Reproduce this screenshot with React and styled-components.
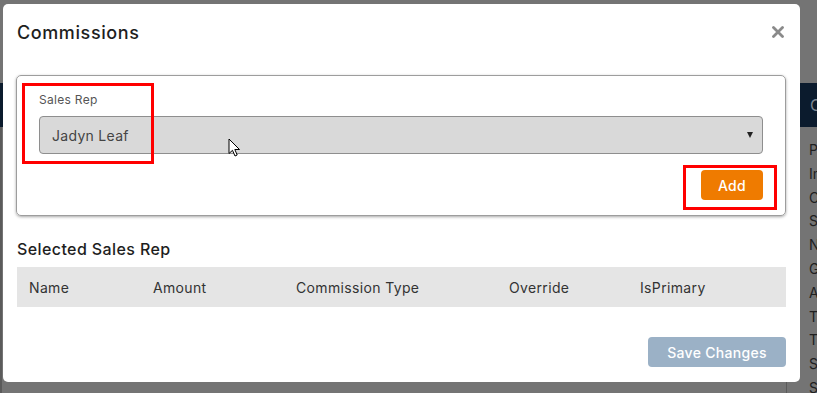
import React from "react";
import styled, { createGlobalStyle } from "styled-components";

const GlobalStyle = createGlobalStyle`
  html, body {
    margin: 0;
    padding: 0;
    background: #737373;
    overflow: hidden;
  }
  * {
    box-sizing: border-box;
  }
`;

const FONT = `"Inter", "DejaVu Sans", sans-serif`;

const Page = styled.div`
  position: relative;
  width: 817px;
  height: 393px;
  overflow: hidden;
  font-family: ${FONT};
`;

/* page behind the dimmed overlay */
const Backdrop = styled.div`
  display: flex;
  flex-direction: column;
  height: 100%;
  background: #747474;
`;

const TopArea = styled.div`
  flex: 0 0 83px;
`;

const NavBar = styled.div`
  flex: 0 0 44px;
  background: #0b1b2d;
  display: flex;
  align-items: center;
  padding-left: 810px;
  color: #7c8590;
  font-size: 16px;
  white-space: nowrap;
  overflow: hidden;
`;

const BackBody = styled.div`
  flex: 1;
  display: flex;
  min-width: 0;
  min-height: 0;
  overflow: hidden;
`;

const LeftColumn = styled.div`
  flex: 0 0 787px;
  border-left: 2px solid #5b5b5b;
  border-right: 1px solid #5b5b5b;
`;

const RightColumn = styled.ul`
  flex: 1;
  min-width: 0;
  overflow: hidden;
  list-style: none;
  margin: 0;
  padding: 11px 0 0 22px;
  display: flex;
  flex-direction: column;
`;

const BackItem = styled.li`
  flex-shrink: 0;
  height: 23.8px;
  line-height: 23.8px;
  font-size: 14px;
  color: #202020;
  white-space: nowrap;
`;

const Modal = styled.div`
  position: absolute;
  left: 3px;
  top: 4px;
  width: 797px;
  height: 378px;
  background: #fff;
  border-radius: 5px;
  padding: 0 14px;
  display: flex;
  flex-direction: column;
`;

const ModalHeader = styled.div`
  height: 71px;
  display: flex;
  align-items: center;
  justify-content: space-between;
  padding-bottom: 15px;
`;

const Title = styled.h4`
  margin: 0;
  font-size: 18px;
  font-weight: 500;
  letter-spacing: 0.6px;
  color: #1e1e1e;
`;

const CloseButton = styled.button`
  border: 0;
  background: none;
  padding: 0;
  margin-right: 2px;
  width: 12px;
  height: 12px;
  display: flex;
  cursor: pointer;
`;

const Card = styled.div`
  margin-left: -1px;
  border: 1px solid #9d9d9d;
  border-radius: 5px;
  box-shadow: 0 1px 3px rgba(0, 0, 0, 0.35);
  padding: 16px 22px 15px 22px;
  display: flex;
  flex-direction: column;
`;

const Label = styled.label`
  font-size: 12px;
  line-height: 16px;
  letter-spacing: 0.3px;
  color: #555;
  margin-bottom: 8px;
`;

const Select = styled.div`
  height: 38px;
  background: #d9d9d9;
  border: 1px solid #8e8e8e;
  border-radius: 4px;
  display: flex;
  align-items: center;
  justify-content: space-between;
  padding: 0 9px 0 12px;
  font-size: 14px;
  letter-spacing: 0.3px;
  color: #444;
`;

const Caret = styled.span`
  width: 0;
  height: 0;
  border-left: 3.5px solid transparent;
  border-right: 3.5px solid transparent;
  border-top: 6px solid #222;
`;

const ActionRow = styled.div`
  display: flex;
  justify-content: flex-end;
  margin-top: 16px;
`;

const Button = styled.button`
  height: 30px;
  width: ${(p) => p.$w}px;
  padding: 0;
  border: 0;
  border-radius: 4px;
  background: ${(p) => p.$bg};
  color: #fff;
  font-family: ${FONT};
  font-size: 14px;
  font-weight: 500;
  letter-spacing: 0.3px;
  cursor: pointer;
`;

const SectionTitle = styled.h5`
  margin: 18px 0 0 0;
  height: 30px;
  display: flex;
  align-items: center;
  font-size: 16px;
  font-weight: 500;
  letter-spacing: 0.4px;
  color: #1e1e1e;
`;

const TableHead = styled.div`
  margin-top: 3px;
  height: 40px;
  background: #e5e5e5;
  display: grid;
  grid-template-columns: 124px 143px 213px 131px 1fr;
  align-items: center;
  padding-left: 12px;
  font-size: 14px;
  letter-spacing: 0.35px;
  color: #333;
`;

const Footer = styled.div`
  margin-top: auto;
  padding-bottom: 15px;
  display: flex;
  justify-content: flex-end;
`;

const Highlight = styled.div`
  position: absolute;
  left: ${(p) => p.$x}px;
  top: ${(p) => p.$y}px;
  width: ${(p) => p.$w}px;
  height: ${(p) => p.$h}px;
  border: 3px solid #f00;
  pointer-events: none;
`;

const Cursor = styled.svg`
  position: absolute;
  left: 228px;
  top: 138px;
`;

const backItems = ["Phone", "Industry", "Company", "Status", "Notes", "Group", "Address", "Type", "Tags", "Source", "Stage"];

const App = () => {
  return (
    <Page>
      <GlobalStyle />
      <Backdrop>
        <TopArea />
        <NavBar>C</NavBar>
        <BackBody>
          <LeftColumn />
          <RightColumn>
            {backItems.map((t) => (
              <BackItem key={t}>{t}</BackItem>
            ))}
          </RightColumn>
        </BackBody>
      </Backdrop>

      <Modal>
        <ModalHeader>
          <Title>Commissions</Title>
          <CloseButton aria-label="Close">
            <svg width="12" height="12" viewBox="0 0 12 12">
              <path d="M1.5 1.5 L10.5 10.5 M10.5 1.5 L1.5 10.5" stroke="#8a8a8a" strokeWidth="2.8" strokeLinecap="round" />
            </svg>
          </CloseButton>
        </ModalHeader>

        <Card>
          <Label>Sales Rep</Label>
          <Select>
            <span>Jadyn Leaf</span>
            <Caret />
          </Select>
          <ActionRow>
            <Button $bg="#ef7b00" $w={62}>Add</Button>
          </ActionRow>
        </Card>

        <SectionTitle>Selected Sales Rep</SectionTitle>
        <TableHead>
          <span>Name</span>
          <span>Amount</span>
          <span>Commission Type</span>
          <span>Override</span>
          <span>IsPrimary</span>
        </TableHead>

        <Footer>
          <Button $bg="#9bb1c6" $w={138}>Save Changes</Button>
        </Footer>
      </Modal>

      <Highlight $x={22} $y={83} $w={132} $h={81} />
      <Highlight $x={683} $y={165} $w={94} $h={45} />

      <Cursor width="13" height="20" viewBox="0 0 13 20">
        <path d="M1 1 L1 15.5 L4.5 12.3 L7 18 L9.2 17 L6.8 11.5 L11.5 11.5 Z" fill="#fff" stroke="#000" strokeWidth="1" strokeLinejoin="round" />
      </Cursor>
    </Page>
  );
};

export default App;
